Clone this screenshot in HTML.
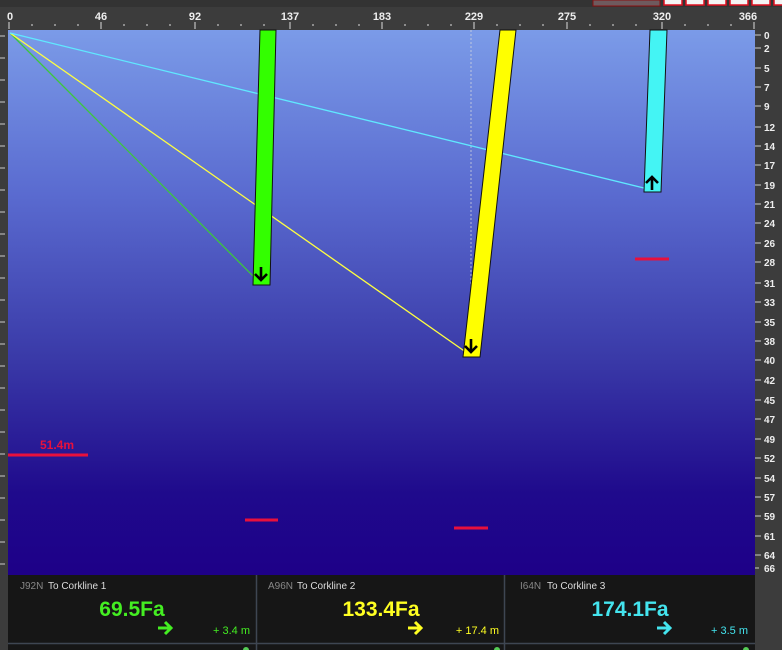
<!DOCTYPE html>
<html><head><meta charset="utf-8"><style>
html,body{margin:0;padding:0;background:#3c3c3c;width:782px;height:650px;overflow:hidden;font-family:"Liberation Sans",sans-serif}
</style></head><body>
<svg width="782" height="650" xmlns="http://www.w3.org/2000/svg" style="position:absolute;left:0;top:0">
<defs>
<linearGradient id="bg" x1="0" y1="0" x2="0" y2="1">
<stop offset="0" stop-color="#7b9be8"/>
<stop offset="0.3" stop-color="#5a6bd0"/>
<stop offset="0.6" stop-color="#3a3aa8"/>
<stop offset="0.85" stop-color="#1f0a8c"/>
<stop offset="1" stop-color="#1e0088"/>
</linearGradient>
</defs>
<rect x="0" y="0" width="782" height="650" fill="#3c3c3c"/>
<rect x="0" y="0" width="782" height="7" fill="#333"/>
<rect x="593" y="0" width="67" height="6" fill="#6e5a5e" stroke="#8a1010" stroke-width="1"/>
<g fill="#f4f4f4" stroke="#e01020" stroke-width="1.5">
<rect x="664" y="-2" width="18" height="7"/><rect x="686" y="-2" width="18" height="7"/><rect x="708" y="-2" width="18" height="7"/><rect x="730" y="-2" width="18" height="7"/><rect x="752" y="-2" width="18" height="7"/><rect x="774" y="-2" width="10" height="7"/>
</g>
<g fill="#eee" font-size="11" font-weight="bold" text-anchor="middle">
<text x="10" y="20">0</text><text x="101" y="20">46</text><text x="195" y="20">92</text><text x="290" y="20">137</text><text x="382" y="20">183</text><text x="474" y="20">229</text><text x="567" y="20">275</text><text x="662" y="20">320</text><text x="748" y="20">366</text>
</g>
<g stroke="#ddd" stroke-width="1">
<path d="M9 22v7M32 24v2M55 24v2M78 24v2M101 22v7M124 24v2M147 24v2M170 24v2M195 22v7M218 24v2M241 24v2M264 24v2M290 22v7M313 24v2M336 24v2M359 24v2M382 22v7M405 24v2M428 24v2M451 24v2M474 22v7M497 24v2M520 24v2M543 24v2M567 22v7M590 24v2M613 24v2M636 24v2M662 22v7M685 24v2M708 24v2M731 24v2M754 22v7"/>
</g>
<rect x="8" y="30" width="747" height="545" fill="url(#bg)"/>
<line x1="471" y1="30" x2="471" y2="330" stroke="#ddd" stroke-width="1" stroke-dasharray="2,2" opacity="0.7"/>
<line x1="10" y1="33" x2="260" y2="283" stroke="#3cc83c" stroke-width="1.3"/>
<line x1="10" y1="33" x2="470" y2="355" stroke="#ffff40" stroke-width="1.3"/>
<line x1="10" y1="33" x2="652" y2="190" stroke="#60e8ff" stroke-width="1.3"/>
<polygon points="260,30 276,30 270,285 253,285" fill="#33ff00" stroke="#111" stroke-width="1"/>
<polygon points="500,30 516,30 480,357 463,357" fill="#ffff00" stroke="#111" stroke-width="1"/>
<polygon points="650,30 667,30 661,192 644,192" fill="#44f4f4" stroke="#111" stroke-width="1"/>
<g stroke="#000" stroke-width="2.6" fill="none">
<path d="M261 267v13M255 274l6 6 6-6"/>
<path d="M471 339v13M465 346l6 6 6-6"/>
<path d="M652 190v-13M646 183l6-6 6 6"/>
</g>
<g stroke="#e8103c" stroke-width="3">
<line x1="8" y1="455" x2="88" y2="455"/><line x1="245" y1="520" x2="278" y2="520"/><line x1="454" y1="528" x2="488" y2="528"/><line x1="635" y1="259" x2="669" y2="259"/>
</g>
<text x="40" y="449" fill="#e8103c" font-size="12" font-weight="bold">51.4m</text>
<g stroke="#ccc" stroke-width="1">
<path d="M0 36h5M0 58h5M0 80h5M0 102h5M0 124h5M0 146h5M0 168h5M0 190h5M0 212h5M0 234h5M0 256h5M0 278h5M0 300h5M0 322h5M0 344h5M0 366h5M0 388h5M0 410h5M0 432h5M0 454h5M0 476h5M0 498h5M0 520h5M0 542h5M0 564h5"/>
</g>
<g stroke="#ccc" stroke-width="1" fill="none">
<path d="M755 35h6M755 48h6M755 68h6M755 87h6M755 106h6M755 127h6M755 146h6M755 165h6M755 185h6M755 204h6M755 223h6M755 243h6M755 262h6M755 283h6M755 302h6M755 322h6M755 341h6M755 360h6M755 380h6M755 400h6M755 419h6M755 439h6M755 458h6M755 478h6M755 497h6M755 516h6M755 536h6M755 555h6M755 568h4"/>
</g>
<g fill="#eee" font-size="10" font-weight="bold">
<text x="764" y="39">0</text><text x="764" y="52">2</text><text x="764" y="72">5</text><text x="764" y="91">7</text><text x="764" y="110">9</text><text x="764" y="131">12</text><text x="764" y="150">14</text><text x="764" y="169">17</text><text x="764" y="189">19</text><text x="764" y="208">21</text><text x="764" y="227">24</text><text x="764" y="247">26</text><text x="764" y="266">28</text><text x="764" y="287">31</text><text x="764" y="306">33</text><text x="764" y="326">35</text><text x="764" y="345">38</text><text x="764" y="364">40</text><text x="764" y="384">42</text><text x="764" y="404">45</text><text x="764" y="423">47</text><text x="764" y="443">49</text><text x="764" y="462">52</text><text x="764" y="482">54</text><text x="764" y="501">57</text><text x="764" y="520">59</text><text x="764" y="540">61</text><text x="764" y="559">64</text><text x="764" y="572">66</text>
</g>
<rect x="8" y="575" width="747" height="75" fill="#161616"/>
<g stroke="#3e4652" stroke-width="1.5">
<line x1="256.5" y1="575" x2="256.5" y2="650"/><line x1="504.5" y1="575" x2="504.5" y2="650"/><line x1="8" y1="643.5" x2="755" y2="643.5"/>
</g>
<g font-size="10">
<text x="20" y="589" fill="#888">J92N</text><text x="48" y="589" fill="#ddd">To Corkline  1</text>
<text x="268" y="589" fill="#888">A96N</text><text x="297" y="589" fill="#ddd">To Corkline  2</text>
<text x="520" y="589" fill="#888">I64N</text><text x="547" y="589" fill="#ddd">To Corkline  3</text>
</g>
<g font-size="21" font-weight="bold" text-anchor="middle">
<text x="132" y="616" fill="#44ee22">69.5Fa</text>
<text x="381" y="616" fill="#ffff22">133.4Fa</text>
<text x="630" y="616" fill="#44e4ee">174.1Fa</text>
</g>
<g font-size="11">
<text x="250" y="634" fill="#44ee22" text-anchor="end">+ 3.4 m</text>
<text x="499" y="634" fill="#ffff22" text-anchor="end">+ 17.4 m</text>
<text x="748" y="634" fill="#44e4ee" text-anchor="end">+ 3.5 m</text>
</g>
<g stroke-width="3" fill="none">
<path d="M158 628h12M165 622l6 6-6 6" stroke="#44ee22"/>
<path d="M408 628h12M415 622l6 6-6 6" stroke="#ffff22"/>
<path d="M657 628h12M664 622l6 6-6 6" stroke="#44e4ee"/>
</g>
<circle cx="246" cy="650" r="3" fill="#5c5"/><circle cx="497" cy="650" r="3" fill="#5c5"/><circle cx="746" cy="650" r="3" fill="#5c5"/>
</svg>
</body></html>
